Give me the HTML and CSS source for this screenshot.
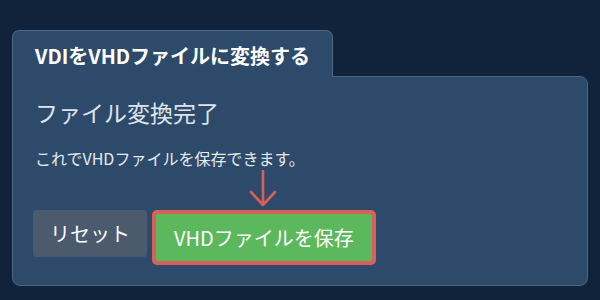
FILE: index.html
```html
<!DOCTYPE html>
<html lang="ja">
<head>
    <meta charset="UTF-8">
    <meta name="viewport" content="width=device-width, initial-scale=1.0">
    <title>VDIをVHDファイルに変換する</title>
    <link rel="stylesheet" href="styles.css">
</head>
<body>
    <main class="converter">
        <div class="tab">VDIをVHDファイルに変換する</div>
        <section class="panel">
            <h2 class="panel-title">ファイル変換完了</h2>
            <p class="panel-text">これでVHDファイルを保存できます。</p>
            <div class="actions">
                <button class="btn btn-reset">リセット</button>
                <div class="save-wrap">
                    <!-- pointer arrow -->
                    <svg class="arrow" width="30" height="38" viewBox="0 0 30 38" aria-hidden="true">
                        <path d="M15 1 V35 M3 22 L15 35 L27 22" fill="none" stroke="#d9605a" stroke-width="2.6" stroke-linecap="round" stroke-linejoin="round"/>
                    </svg>
                    <button class="btn btn-save">VHDファイルを保存</button>
                </div>
            </div>
        </section>
    </main>
</body>
</html>
```

FILE: styles.css
```css
/* General styles */
body {
    font-family: 'Noto Sans CJK JP', 'Noto Sans', sans-serif;
    background-color: #10233a; /* Dark navy */
    color: #fff;
    margin: 0;
    padding: 30px 12px 0;
}

.converter {
    display: flex;
    flex-direction: column;
    align-items: flex-start;
}

/* Tab on top of the panel */
.tab {
    position: relative;
    z-index: 1;
    margin-bottom: -1px;
    padding: 10px 22px 6px;
    font-size: 20px;
    font-weight: bold;
    line-height: 30px;
    background-color: #2d4a6a;
    border: 1px solid #4b6686;
    border-bottom: none;
    border-radius: 7px 7px 0 0;
}

.panel {
    box-sizing: border-box;
    width: 100%;
    padding: 17px 22px 20px;
    background-color: #2d4a6a;
    border: 1px solid #4b6686;
    border-radius: 0 8px 8px 8px;
}

.panel-title {
    margin: 0;
    font-size: 23px;
    font-weight: normal;
    line-height: 36px;
    color: #dfe4ea;
}

.panel-text {
    margin: 17px 0 0;
    font-size: 16px;
    line-height: 22px;
    color: #e6eaef;
}

/* Buttons */
.actions {
    display: flex;
    align-items: flex-start;
    gap: 5px;
    margin: 41px 0 0 -2px;
}

.btn {
    font-family: inherit;
    font-size: 20px;
    line-height: 27px;
    color: #fff;
    border: none;
    border-radius: 4px;
    padding: 10px 17px;
    cursor: pointer;
}

.btn-reset {
    background-color: #4b5b6d;
}

.save-wrap {
    position: relative;
}

.btn-save {
    background-color: #5cb85c;
    padding: 10px 18px;
    border: 4px solid #d9605a; /* highlight outline */
    border-radius: 5px;
}

.arrow {
    position: absolute;
    left: 50%;
    bottom: 100%;
    margin-left: -16px;
    margin-bottom: 2px;
}
```
